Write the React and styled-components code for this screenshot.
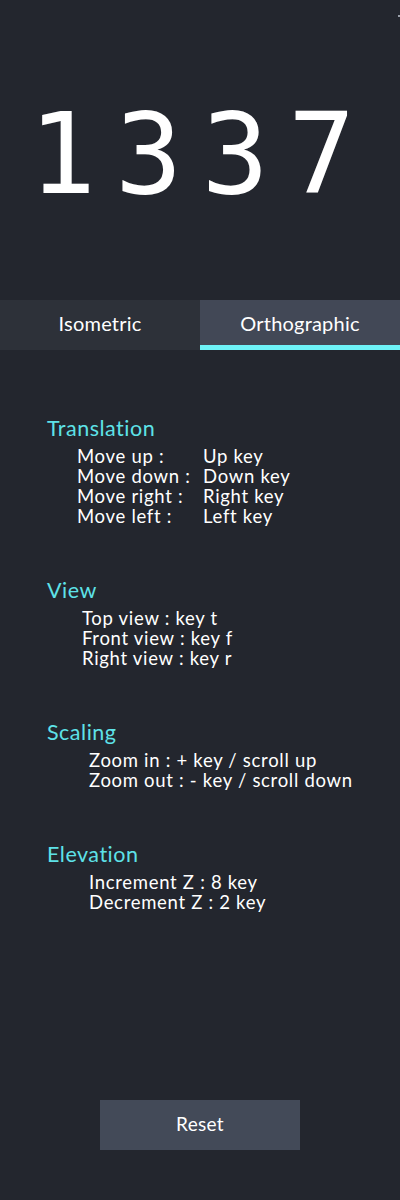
import React, { useState } from "react";
import styled, { createGlobalStyle } from "styled-components";

const Global = createGlobalStyle`
  html, body { margin: 0; padding: 0; background: #23262e; }
  body { font-family: "Lato", "Open Sans", sans-serif; color: #ffffff; }
`;

const Page = styled.div`
  width: 400px;
  min-height: 1200px;
  display: flex;
  flex-direction: column;
  background: #23262e;
  position: relative;
`;

const Display = styled.div`
  height: 300px;
  display: flex;
  align-items: center;
  justify-content: center;
  padding-right: 16px;
  box-sizing: border-box;
`;

const Digits = styled.div`
  font-family: "DejaVu Sans Mono", monospace;
  font-size: 112px;
  line-height: 1;
  letter-spacing: 19px;
  margin-right: -19px;
  color: #ffffff;
  padding-top: 8px;
`;

const Corner = styled.div`
  position: absolute;
  top: 15px;
  right: 0;
  width: 2px;
  height: 2px;
  background: #9aa0aa;
`;

const Tabs = styled.div`
  display: grid;
  grid-template-columns: 1fr 1fr;
  height: 50px;
`;

const Tab = styled.button`
  border: none;
  margin: 0;
  padding: 0;
  font-family: inherit;
  font-size: 20px;
  color: #ffffff;
  cursor: pointer;
  background: ${(p) => (p.$active ? "#424856" : "#2d3139")};
  border-bottom: 5px solid ${(p) => (p.$active ? "#6ef3f8" : "transparent")};
  padding-top: 1px;
  letter-spacing: 0.2px;
`;

const Content = styled.div`
  flex: 1;
  display: flex;
  flex-direction: column;
  padding: 66px 0 50px 47px;
`;

const Section = styled.section`
  margin-bottom: 52px;
`;

const Heading = styled.h3`
  margin: 0 0 6px;
  font-size: 21.5px;
  line-height: 24px;
  font-weight: 400;
  color: #5ee2e8;
  letter-spacing: 0.5px;
`;

const Items = styled.div`
  padding-left: ${(p) => p.$indent}px;
  display: grid;
  grid-template-columns: ${(p) => (p.$cols ? p.$cols : "auto")};
  justify-content: start;
  font-size: 18.5px;
  line-height: 20px;
  letter-spacing: 0.7px;
`;

const Cell = styled.div`
  white-space: pre;
`;

const ResetButton = styled.button`
  align-self: flex-start;
  margin: auto 0 0 53px;
  width: 200px;
  height: 50px;
  padding: 0 0 4px;
  border: none;
  background: #434a58;
  color: #ffffff;
  font-family: inherit;
  font-size: 19px;
  letter-spacing: 0.3px;
  cursor: pointer;
`;

const sections = [
  {
    title: "Translation",
    indent: 30,
    cols: "126px auto",
    rows: [
      ["Move up :", "Up key"],
      ["Move down :", "Down key"],
      ["Move right :", "Right key"],
      ["Move left :", "Left key"],
    ],
  },
  {
    title: "View",
    indent: 35,
    rows: [["Top view : key t"], ["Front view : key f"], ["Right view : key r"]],
  },
  {
    title: "Scaling",
    indent: 42,
    rows: [["Zoom in : + key / scroll up"], ["Zoom out : - key / scroll down"]],
  },
  {
    title: "Elevation",
    indent: 42,
    rows: [["Increment Z : 8 key"], ["Decrement Z : 2 key"]],
  },
];

export default function App() {
  const [mode, setMode] = useState("ortho");
  return (
    <>
      <Global />
      <Page>
        <Corner />
        <Display>
          <Digits>1337</Digits>
        </Display>
        <Tabs>
          <Tab $active={mode === "iso"} onClick={() => setMode("iso")}>
            Isometric
          </Tab>
          <Tab $active={mode === "ortho"} onClick={() => setMode("ortho")}>
            Orthographic
          </Tab>
        </Tabs>
        <Content>
          {sections.map((s) => (
            <Section key={s.title}>
              <Heading>{s.title}</Heading>
              <Items $indent={s.indent} $cols={s.cols}>
                {s.rows.flat().map((t, i) => (
                  <Cell key={i}>{t}</Cell>
                ))}
              </Items>
            </Section>
          ))}
          <ResetButton>Reset</ResetButton>
        </Content>
      </Page>
    </>
  );
}
